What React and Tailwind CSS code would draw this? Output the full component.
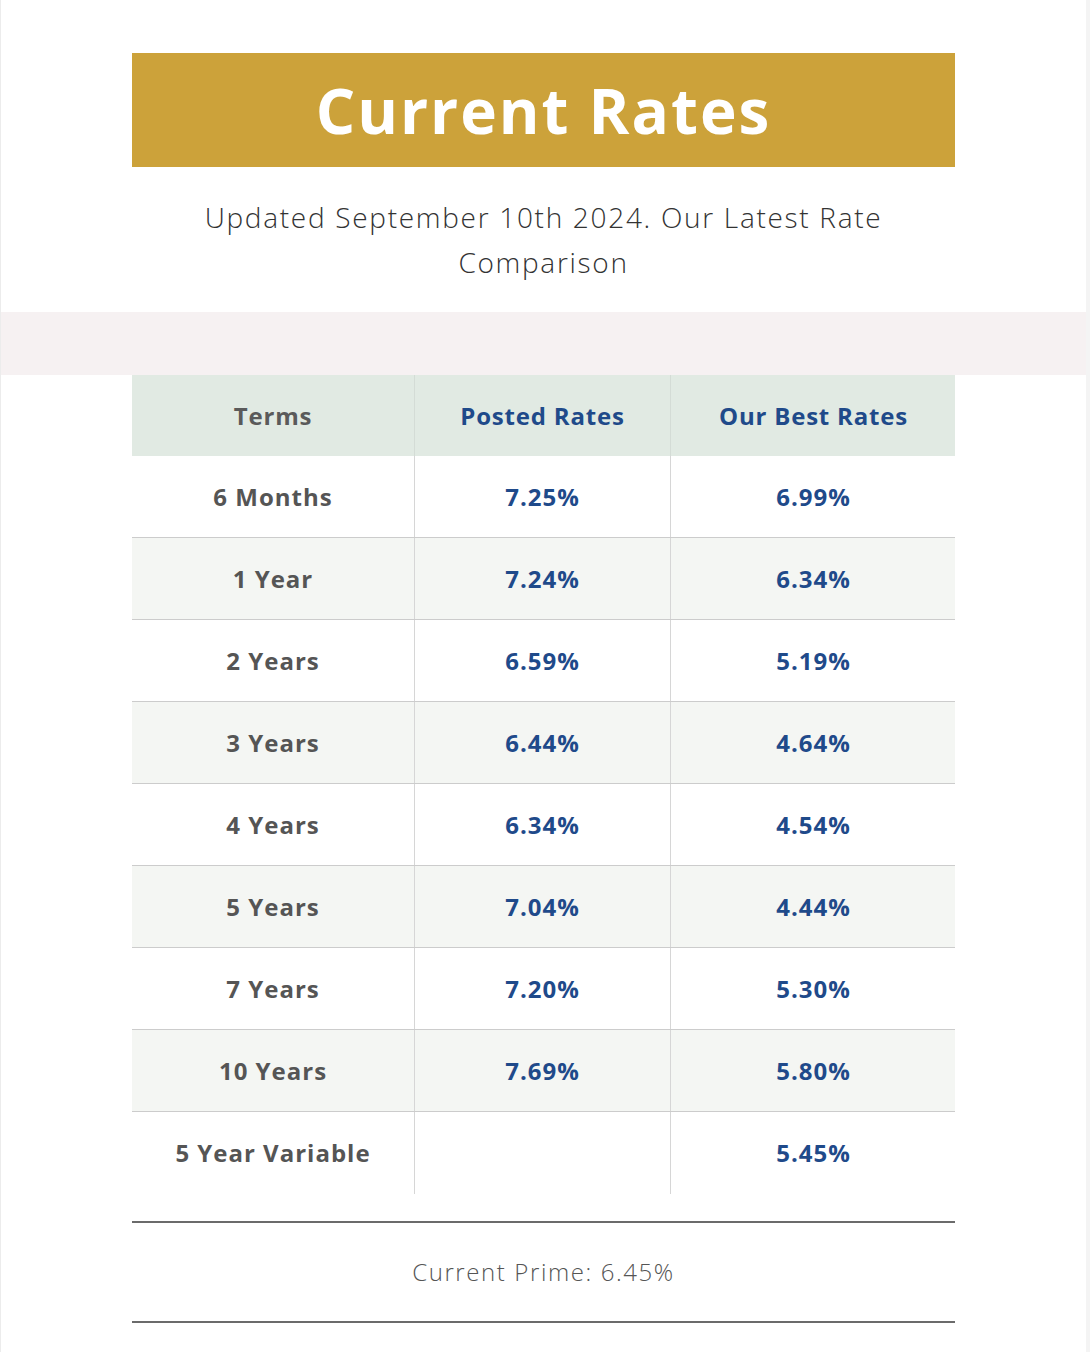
import React from "react";

const rows = [
  { term: "6 Months", posted: "7.25%", best: "6.99%" },
  { term: "1 Year", posted: "7.24%", best: "6.34%" },
  { term: "2 Years", posted: "6.59%", best: "5.19%" },
  { term: "3 Years", posted: "6.44%", best: "4.64%" },
  { term: "4 Years", posted: "6.34%", best: "4.54%" },
  { term: "5 Years", posted: "7.04%", best: "4.44%" },
  { term: "7 Years", posted: "7.20%", best: "5.30%" },
  { term: "10 Years", posted: "7.69%", best: "5.80%" },
  { term: "5 Year Variable", posted: "", best: "5.45%" },
];

export default function App() {
  return (
    <div
      className="min-h-[1352px] w-[1090px] bg-white border-l border-[#ececec] border-r-4 border-r-[#f4f4f4]"
      style={{ fontFamily: '"Open Sans", "Liberation Sans", sans-serif' }}
    >
      {/* Header */}
      <div className="px-[131px] pt-[53px]">
        <div className="h-[114px] bg-[#cca23a] flex items-center justify-center">
          <h1 className="text-white font-bold text-[62px] tracking-[2px] leading-none">
            Current Rates
          </h1>
        </div>
        <p className="text-center text-[#333333] text-[28px] font-light leading-[45px] mt-[28px] px-[40px] tracking-[1.7px]">
          Updated September 10th 2024. Our Latest Rate Comparison
        </p>
      </div>

      <div className="h-[63px] bg-[#f6f1f2] mt-[27px]" />

      {/* Table */}
      <div className="px-[131px]">
        <div className="grid grid-cols-[282px_256px_286px] h-[81px] bg-[#e1eae3] text-[24px] font-bold tracking-[0.8px]">
          <div className="flex items-center justify-center text-[#5a5a5a]">Terms</div>
          <div className="flex items-center justify-center text-[#1f4a8a] border-l border-[#d4dcd6]">Posted Rates</div>
          <div className="flex items-center justify-center text-[#1f4a8a] border-l border-[#d4dcd6]">Our Best Rates</div>
        </div>
        {rows.map((r, i) => (
          <div
            key={r.term}
            className={
              "grid grid-cols-[282px_256px_286px] h-[82px] text-[24px] font-bold tracking-[1px] " +
              (i % 2 === 1 ? "bg-[#f4f6f3] " : "bg-white ") +
              (i < rows.length - 1 ? "border-b border-[#cccccc]" : "h-[81px]")
            }
          >
            <div className="flex items-center justify-center text-[#555555]">{r.term}</div>
            <div className="flex items-center justify-center text-[#1f4a8a] border-l border-[#d6d6d6]">{r.posted}</div>
            <div className="flex items-center justify-center text-[#1f4a8a] border-l border-[#d6d6d6]">{r.best}</div>
          </div>
        ))}

        <div className="mt-[27px] border-t-2 border-b-2 border-[#6b6b6b] h-[102px] flex items-center justify-center">
          <span className="text-[24px] font-light text-[#555555] tracking-[1.6px]">Current Prime: 6.45%</span>
        </div>
      </div>
    </div>
  );
}
